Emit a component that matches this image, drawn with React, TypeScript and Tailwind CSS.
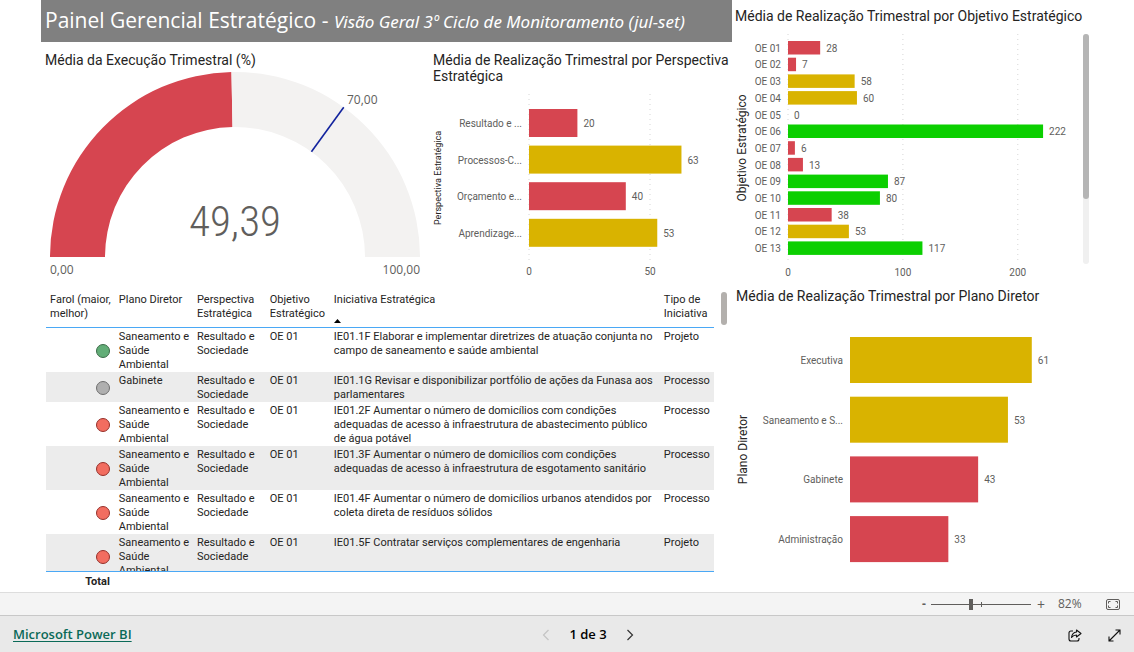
import React from 'react';

const RED = '#D64550';
const YELLOW = '#D9B300';
const GREEN = '#0BCF00';

type Bar = { label: string; value: number; color: string };

const perspectivas: Bar[] = [
  { label: 'Resultado e ...', value: 20, color: RED },
  { label: 'Processos-C...', value: 63, color: YELLOW },
  { label: 'Orçamento e...', value: 40, color: RED },
  { label: 'Aprendizage...', value: 53, color: YELLOW },
];

const objetivos: Bar[] = [
  { label: 'OE 01', value: 28, color: RED },
  { label: 'OE 02', value: 7, color: RED },
  { label: 'OE 03', value: 58, color: YELLOW },
  { label: 'OE 04', value: 60, color: YELLOW },
  { label: 'OE 05', value: 0, color: RED },
  { label: 'OE 06', value: 222, color: GREEN },
  { label: 'OE 07', value: 6, color: RED },
  { label: 'OE 08', value: 13, color: RED },
  { label: 'OE 09', value: 87, color: GREEN },
  { label: 'OE 10', value: 80, color: GREEN },
  { label: 'OE 11', value: 38, color: RED },
  { label: 'OE 12', value: 53, color: YELLOW },
  { label: 'OE 13', value: 117, color: GREEN },
];

const planos: Bar[] = [
  { label: 'Executiva', value: 61, color: YELLOW },
  { label: 'Saneamento e S...', value: 53, color: YELLOW },
  { label: 'Gabinete', value: 43, color: RED },
  { label: 'Administração', value: 33, color: RED },
];

const SSA = 'Saneamento e Saúde Ambiental';

const iniciativas = [
  { farol: 'green', plano: SSA, nome: 'IE01.1F Elaborar e implementar diretrizes de atuação conjunta no campo de saneamento e saúde ambiental', tipo: 'Projeto' },
  { farol: 'gray', plano: 'Gabinete', nome: 'IE01.1G Revisar e disponibilizar portfólio de ações da Funasa aos parlamentares', tipo: 'Processo' },
  { farol: 'red', plano: SSA, nome: 'IE01.2F Aumentar o número de domicílios com condições adequadas de acesso à infraestrutura de abastecimento público de água potável', tipo: 'Processo' },
  { farol: 'red', plano: SSA, nome: 'IE01.3F Aumentar o número de domicílios com condições adequadas de acesso à infraestrutura de esgotamento sanitário', tipo: 'Processo' },
  { farol: 'red', plano: SSA, nome: 'IE01.4F Aumentar o número de domicílios urbanos atendidos por coleta direta de resíduos sólidos', tipo: 'Processo' },
  { farol: 'red', plano: SSA, nome: 'IE01.5F Contratar serviços complementares de engenharia', tipo: 'Projeto' },
];

const farolClass: Record<string, string> = {
  green: 'bg-[#62AD77] border-[#3B6B48]',
  gray: 'bg-[#AFAFAF] border-[#6E6E6E]',
  red: 'bg-[#F26D60] border-[#96302A]',
};

type ChartProps = {
  data: Bar[];
  axisTitle: string;
  axisTitleClass: string;
  axisTitleX: number;
  width: number;
  height: number;
  left: number;
  top: number;
  pitch: number;
  barHeight: number;
  scale: number;
  ticks?: number[];
  gridTop?: number;
  gridBottom?: number;
};

const BarChart: React.FC<ChartProps> = (p) => {
  const middle = p.top + ((p.data.length - 1) * p.pitch + p.barHeight) / 2;
  return (
    <svg
      viewBox={`0 0 ${p.width} ${p.height}`}
      className="block w-full font-[Roboto,sans-serif]"
      role="img"
      aria-label={p.axisTitle}
    >
      {(p.ticks ?? []).map((t) => (
        <g key={t}>
          <line
            x1={p.left + t * p.scale}
            x2={p.left + t * p.scale}
            y1={p.gridTop}
            y2={p.gridBottom}
            stroke="#D6D6D6"
            strokeDasharray="1 4"
          />
          <text x={p.left + t * p.scale} y={(p.gridBottom ?? 0) + 13} textAnchor="middle" className="fill-[#605E5C] text-[10px]">
            {t}
          </text>
        </g>
      ))}
      {p.data.map((d, i) => {
        const y = p.top + i * p.pitch;
        return (
          <g key={d.label}>
            <text x={p.left - 7} y={y + p.barHeight / 2 + 4} textAnchor="end" className="fill-[#605E5C] text-[10px]">
              {d.label}
            </text>
            <rect x={p.left} y={y} width={d.value * p.scale} height={p.barHeight} fill={d.color} />
            <text x={p.left + d.value * p.scale + 6} y={y + p.barHeight / 2 + 4} className="fill-[#605E5C] text-[10px]">
              {d.value}
            </text>
          </g>
        );
      })}
      <text transform={`translate(${p.axisTitleX} ${middle}) rotate(-90)`} textAnchor="middle" className={p.axisTitleClass}>
        {p.axisTitle}
      </text>
    </svg>
  );
};

const CX = 194;
const CY = 187;
const OUTER = 185;
const INNER = 130;

const point = (percent: number, r: number) => {
  const a = Math.PI * (1 - percent / 100);
  return `${CX + r * Math.cos(a)} ${CY - r * Math.sin(a)}`;
};

const ring = (from: number, to: number) =>
  `M${point(from, OUTER)} A${OUTER} ${OUTER} 0 0 1 ${point(to, OUTER)} L${point(to, INNER)} A${INNER} ${INNER} 0 0 0 ${point(from, INNER)} Z`;

const Gauge: React.FC = () => (
  <svg viewBox="0 0 388 212" className="block w-full" role="img" aria-label="Média da Execução Trimestral">
    <path d={ring(0, 49.39)} fill={RED} />
    <path d={ring(49.39, 100)} fill="#F3F2F1" />
    <path d={`M${point(70, OUTER)} L${point(70, INNER)}`} stroke="#12239E" strokeWidth="1.6" />
    <g className="fill-[#605E5C] text-[12px]">
      <text x="9" y="204">0,00</text>
      <text x="379" y="204" textAnchor="end">100,00</text>
      <text x="306" y="34">70,00</text>
    </g>
    <text x="194" y="166" textAnchor="middle" className="fill-[#605E5C] font-['Roboto_Condensed',Roboto,sans-serif] text-[43px] font-light">
      49,39
    </text>
  </svg>
);

const ChartTitle: React.FC<{ children: React.ReactNode }> = ({ children }) => (
  <h2 className="font-[Roboto,sans-serif] text-[14px] leading-4 text-[#252423]">{children}</h2>
);

const InitiativeTable: React.FC = () => (
  <div className="flex h-[302px] gap-[7px] pl-[5px] pr-[5px]">
    <div className="min-w-0 flex-1 overflow-hidden">
      <table className="w-full table-fixed border-separate border-spacing-0 text-left font-[Roboto,sans-serif] text-[11px] leading-[14px] text-[#252423]">
        <colgroup>
          <col className="w-[10.3%]" />
          <col className="w-[11.7%]" />
          <col className="w-[10.9%]" />
          <col className="w-[9.6%]" />
          <col className="w-[49.4%]" />
          <col />
        </colgroup>
        <thead>
          <tr className="h-[38px] align-top *:border-b *:border-[#4AA8F5] *:pt-[3px] *:pl-1 *:font-normal">
            <th>Farol (maior, melhor)</th>
            <th>Plano Diretor</th>
            <th>Perspectiva Estratégica</th>
            <th>Objetivo Estratégico</th>
            <th>
              Iniciativa Estratégica
              <svg viewBox="0 0 7 4" className="mt-3 block h-1 w-[7px]">
                <path d="M0 4 3.5 0 7 4Z" fill="#000" />
              </svg>
            </th>
            <th>Tipo de Iniciativa</th>
          </tr>
        </thead>
        <tbody>
          {iniciativas.map((r) => (
            <tr key={r.nome} className="align-top even:bg-[#ECECEC] *:pt-[2px] *:pl-1">
              <td className="pr-[5px] align-middle">
                <span className={`ml-auto block size-[14px] rounded-full border ${farolClass[r.farol]}`} />
              </td>
              <td>{r.plano}</td>
              <td>Resultado e Sociedade</td>
              <td>OE 01</td>
              <td>{r.nome}</td>
              <td>{r.tipo}</td>
            </tr>
          ))}
        </tbody>
        <tfoot className="sticky bottom-0 bg-white">
          <tr className="h-[21px] align-top *:border-t *:border-[#4AA8F5] *:pt-[3px]">
            <td className="pr-[5px] text-right font-bold">Total</td>
            <td colSpan={5} />
          </tr>
        </tfoot>
      </table>
    </div>
    <div className="w-[6px] pt-[2px]">
      <div className="h-[33px] rounded-full bg-[#B3B0AD]" />
    </div>
  </div>
);

const ZoomBar: React.FC = () => (
  <div className="flex h-6 items-center justify-end border-y border-t-[#DDDDDD] border-b-[#C8C8C8] bg-[#F4F4F4] pr-[14px] text-[12px] text-[#605E5C]">
    <button type="button" aria-label="Reduzir" className="w-[14px] font-bold">-</button>
    <div className="relative flex h-3 w-[100px] items-center">
      <span className="absolute left-1/2 h-[5px] w-px bg-[#605E5C]" />
      <input
        type="range"
        aria-label="Zoom"
        min={0}
        max={200}
        defaultValue={80}
        className="h-px w-full appearance-none bg-[#605E5C] [&::-webkit-slider-thumb]:h-[11px] [&::-webkit-slider-thumb]:w-1 [&::-webkit-slider-thumb]:appearance-none [&::-webkit-slider-thumb]:bg-[#605E5C]"
      />
    </div>
    <button type="button" aria-label="Ampliar" className="w-5 text-[14px]">+</button>
    <span className="ml-[7px] w-12">82%</span>
    <button type="button" aria-label="Ajustar à página">
      <svg width="14" height="11" viewBox="0 0 14 11" fill="none" stroke="#605E5C">
        <rect x="0.5" y="0.5" width="13" height="10" rx="1.5" />
        <path d="M2.5 4.5v-2h2M9.5 2.5h2v2M11.5 6.5v2h-2M4.5 8.5h-2v-2" />
      </svg>
    </button>
  </div>
);

const Footer: React.FC = () => (
  <footer className="grid h-9 grid-cols-[1fr_auto_1fr] items-center bg-[#E9E9E9] px-[13px] pt-[2px]">
    <a
      href="#"
      className="justify-self-start text-[13px] font-semibold text-[#0B6A58] underline underline-offset-2"
    >
      Microsoft Power BI
    </a>
    <nav className="flex items-center gap-[19px] pl-[42px] text-[13px] font-semibold text-black">
      <button type="button" aria-label="Página anterior">
        <svg width="8" height="12" viewBox="0 0 8 12" fill="none" stroke="#C4C4C4" strokeWidth="1.2">
          <path d="M6.5 1 1.5 6l5 5" />
        </svg>
      </button>
      <span>1 de 3</span>
      <button type="button" aria-label="Próxima página">
        <svg width="8" height="12" viewBox="0 0 8 12" fill="none" stroke="#333" strokeWidth="1.2">
          <path d="M1.5 1l5 5-5 5" />
        </svg>
      </button>
    </nav>
    <div className="flex items-center gap-[26px] justify-self-end">
      <button type="button" aria-label="Compartilhar">
        <svg width="14" height="13" viewBox="0 0 14 13" fill="none" stroke="#111" strokeWidth="1.1" strokeLinejoin="round">
          <path d="M5 2H3Q1 2 1 4v6q0 2 2 2h6q2 0 2-2V9" />
          <path d="M8.5 1 13 4.500 8.5 8V6Q5.500 6 3.500 8.500 4.200 3.500 8.500 3Z" />
        </svg>
      </button>
      <button type="button" aria-label="Tela cheia">
        <svg width="13" height="13" viewBox="0 0 13 13" fill="none" stroke="#111" strokeWidth="1.1">
          <path d="M1 12 12 1M7.5 1H12v4.5M1 7.5V12h4.5" />
        </svg>
      </button>
    </div>
  </footer>
);

const App: React.FC = () => {
  return (
    <div className="flex min-h-screen flex-col bg-white font-['Open_Sans',sans-serif]">
      <main className="grid flex-1 grid-cols-[691fr_402fr] items-start pl-[41px]">
        <div className="min-w-0">
          <header className="flex h-[42px] items-center bg-[#808080] pl-1 text-white">
            <h1 className="whitespace-nowrap text-[21px]">
              Painel Gerencial Estratégico -{' '}
              <em className="font-['Noto_Sans',sans-serif] text-[17px]">Visão Geral 3º Ciclo de Monitoramento (jul-set)</em>
            </h1>
          </header>
          <div className="grid h-[248px] grid-cols-[388fr_303fr] pt-[10px]">
            <section>
              <div className="pl-1">
                <ChartTitle>Média da Execução Trimestral (%)</ChartTitle>
              </div>
              <div className="pt-[2px]">
                <Gauge />
              </div>
            </section>
            <section>
              <div className="pl-1">
                <ChartTitle>Média de Realização Trimestral por Perspectiva Estratégica</ChartTitle>
              </div>
              <BarChart
                data={perspectivas}
                axisTitle="Perspectiva Estratégica"
                axisTitleClass="fill-[#252423] text-[9px]"
                axisTitleX={12}
                width={303}
                height={196}
                left={100}
                top={25}
                pitch={36.6}
                barHeight={28}
                scale={2.42}
                ticks={[0, 50]}
                gridTop={10}
                gridBottom={178}
              />
            </section>
          </div>
          <InitiativeTable />
        </div>
        <div className="min-w-0">
          <section className="h-[280px] pt-2">
            <div className="pl-[3px]">
              <ChartTitle>Média de Realização Trimestral por Objetivo Estratégico</ChartTitle>
            </div>
            <div className="flex">
              <div className="min-w-0 flex-1">
                <BarChart
                  data={objetivos}
                  axisTitle="Objetivo Estratégico"
                  axisTitleClass="fill-[#252423] text-[12px]"
                  axisTitleX={14}
                  width={351}
                  height={256}
                  left={56}
                  top={17}
                  pitch={16.7}
                  barHeight={13.5}
                  scale={1.149}
                  ticks={[0, 100, 200]}
                  gridTop={10}
                  gridBottom={239}
                />
              </div>
              <div className="mr-[45px] mt-[10px] h-[230px] w-[6px] rounded-full bg-[#F0F0F0]">
                <div className="h-[165px] rounded-full bg-[#B5B5B5]" />
              </div>
            </div>
          </section>
          <section className="pt-2">
            <div className="pl-1">
              <ChartTitle>Média de Realização Trimestral por Plano Diretor</ChartTitle>
            </div>
            <BarChart
              data={planos}
              axisTitle="Plano Diretor"
              axisTitleClass="fill-[#252423] text-[12px]"
              axisTitleX={15}
              width={402}
              height={288}
              left={118}
              top={33}
              pitch={59.7}
              barHeight={46}
              scale={2.98}
            />
          </section>
        </div>
      </main>
      <ZoomBar />
      <Footer />
    </div>
  );
};

export default App;
